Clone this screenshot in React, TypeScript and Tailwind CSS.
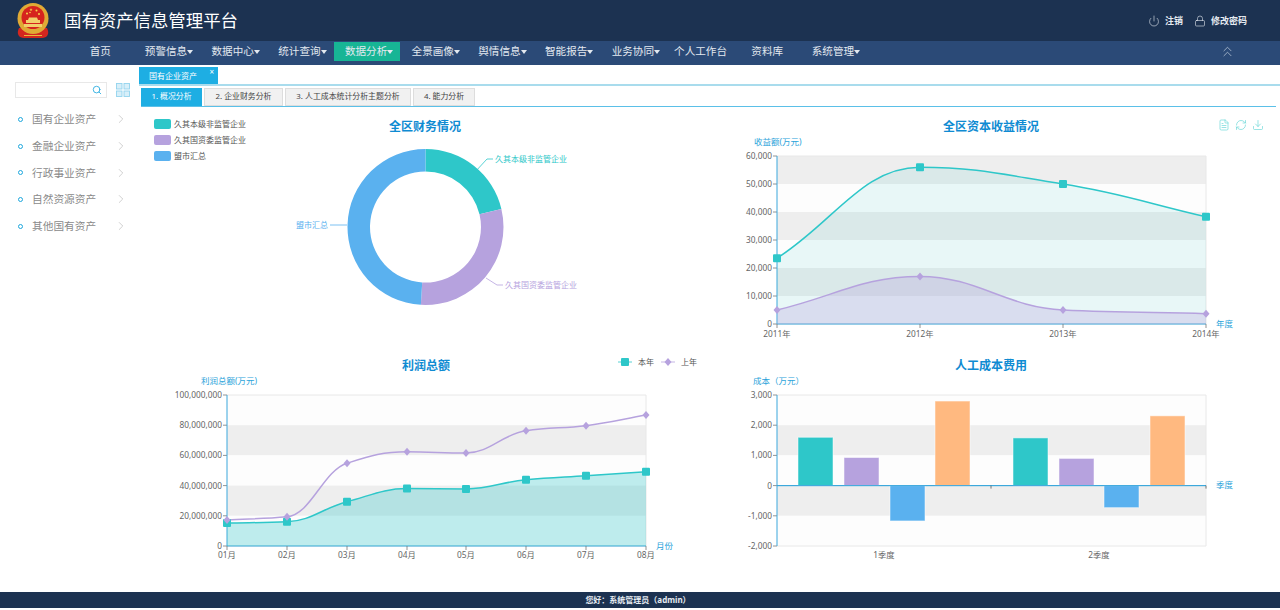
import { ChevronRight, ChevronsUp, Download, FileText, Lock, Power, RefreshCw, Search } from "lucide-react";

type Pt = [number, number];

const TEAL = "#2ec7c9";
const PURPLE = "#b6a2de";
const BLUE = "#5ab1ef";
const ORANGE = "#ffb980";
const AXIS = "#3ba7dc";

const navItems = [
  { label: "首页" },
  { label: "预警信息", caret: true },
  { label: "数据中心", caret: true },
  { label: "统计查询", caret: true },
  { label: "数据分析", caret: true, active: true },
  { label: "全景画像", caret: true },
  { label: "舆情信息", caret: true },
  { label: "智能报告", caret: true },
  { label: "业务协同", caret: true },
  { label: "个人工作台" },
  { label: "资料库" },
  { label: "系统管理", caret: true },
];

const sideItems = ["国有企业资产", "金融企业资产", "行政事业资产", "自然资源资产", "其他国有资产"];

const subTabs = [
  { label: "1. 概况分析", width: "w-[61px]", active: true },
  { label: "2. 企业财务分析", width: "w-[79px]" },
  { label: "3. 人工成本统计分析主题分析", width: "w-[126px]" },
  { label: "4. 能力分析", width: "w-[62px]" },
];

// 平滑曲線，轉折點切線為水平
const smooth = (pts: Pt[]) => {
  const sec = (i: number) => (pts[i + 1][1] - pts[i][1]) / (pts[i + 1][0] - pts[i][0]);
  const slope = (i: number) => {
    if (i === 0) return sec(0);
    if (i === pts.length - 1) return sec(i - 1);
    const d1 = sec(i - 1);
    const d2 = sec(i);
    if (d1 * d2 <= 0) return 0;
    return (2 * d1 * d2) / (d1 + d2);
  };
  let d = `M${pts[0][0]} ${pts[0][1]}`;
  for (let i = 0; i < pts.length - 1; i++) {
    const dx = (pts[i + 1][0] - pts[i][0]) * 0.4;
    d += ` C${pts[i][0] + dx} ${pts[i][1] + slope(i) * dx} ${pts[i + 1][0] - dx} ${pts[i + 1][1] - slope(i + 1) * dx} ${pts[i + 1][0]} ${pts[i + 1][1]}`;
  }
  return d;
};

const arc = (cx: number, cy: number, r0: number, r1: number, a0: number, a1: number) => {
  const p = (r: number, a: number) => {
    const t = (a * Math.PI) / 180;
    return `${cx + r * Math.sin(t)} ${cy - r * Math.cos(t)}`;
  };
  const large = a1 - a0 > 180 ? 1 : 0;
  return `M${p(r1, a0)} A${r1} ${r1} 0 ${large} 1 ${p(r1, a1)} L${p(r0, a1)} A${r0} ${r0} 0 ${large} 0 ${p(r0, a0)} Z`;
};

const Square = ({ x, y }: { x: number; y: number }) => (
  <rect x={x - 4} y={y - 4} width={8} height={8} rx={1} fill={TEAL} />
);

const Diamond = ({ x, y }: { x: number; y: number }) => (
  <path d={`M${x} ${y - 4} L${x + 3.5} ${y} L${x} ${y + 4} L${x - 3.5} ${y} Z`} fill={PURPLE} />
);

const Title = ({ x, y, children }: { x: number; y: number; children: string }) => (
  <text x={x} y={y + 4.5} textAnchor="middle" fontSize={12} fontWeight={700} fill="#0f8bd2">
    {children}
  </text>
);

const AxisName = ({ x, y, children }: { x: number; y: number; children: string }) => (
  <text x={x} y={y + 3} fontSize={8.5} fill="#2ba3da">
    {children}
  </text>
);

// 背景色帶與座標軸
const Grid = ({
  left,
  right,
  top,
  step,
  labels,
  firstGrey,
  zeroY,
  bottom,
}: {
  left: number;
  right: number;
  top: number;
  step: number;
  labels: string[];
  firstGrey: boolean;
  zeroY: number;
  bottom: number;
}) => (
  <g>
    {labels.slice(0, -1).map((_, i) => (
      <rect
        key={i}
        x={left}
        y={top + i * step}
        width={right - left}
        height={step}
        fill={(i % 2 === 0) === firstGrey ? "#eeeeee" : "#fdfdfd"}
      />
    ))}
    <path d={`M${left} ${top} H${right} V${bottom} H${left}`} fill="none" stroke="#e8e8e8" strokeWidth={1} />
    {labels.map((label, i) => (
      <g key={label}>
        <line x1={left - 4} x2={left} y1={top + i * step} y2={top + i * step} stroke="#777" strokeWidth={0.8} />
        <text x={left - 5} y={top + i * step + 3} textAnchor="end" fontSize={8.3} fill="#666">
          {label}
        </text>
      </g>
    ))}
    <line x1={left} x2={left} y1={top} y2={bottom} stroke={AXIS} strokeWidth={1} />
    <line x1={left} x2={right} y1={zeroY} y2={zeroY} stroke={AXIS} strokeWidth={1} />
  </g>
);

const PieChart = () => (
  <svg viewBox="139 108 570 239" className="h-[239px] w-[570px]">
    <Title x={425} y={126}>全区财务情况</Title>
    {[
      { y: 124, c: TEAL, t: "久其本级非监管企业" },
      { y: 140, c: PURPLE, t: "久其国资委监管企业" },
      { y: 156, c: BLUE, t: "盟市汇总" },
    ].map((l) => (
      <g key={l.t}>
        <rect x={154} y={l.y - 5} width={17} height={10} rx={2} fill={l.c} />
        <text x={174} y={l.y + 3} fontSize={8} fill="#555">{l.t}</text>
      </g>
    ))}
    <path d={arc(425.5, 227, 55.5, 78, 0, 76.6)} fill={TEAL} />
    <path d={arc(425.5, 227, 55.5, 78, 76.6, 183.4)} fill={PURPLE} />
    <path d={arc(425.5, 227, 55.5, 78, 183.4, 360)} fill={BLUE} />
    <path d="M475 172 L487 159 H493" fill="none" stroke={TEAL} strokeWidth={0.8} />
    <text x={495} y={162} fontSize={8} fill={TEAL}>久其本级非监管企业</text>
    <path d="M486 278 L497 285 H503" fill="none" stroke={PURPLE} strokeWidth={0.8} />
    <text x={505} y={288} fontSize={8} fill={PURPLE}>久其国资委监管企业</text>
    <path d="M330 225 H347" fill="none" stroke={BLUE} strokeWidth={0.8} />
    <text x={296} y={228} fontSize={8} fill={BLUE}>盟市汇总</text>
  </svg>
);

const ReturnChart = () => {
  const xs = [777, 920, 1063, 1206];
  const y = (v: number) => 324 - (v * 28) / 10000;
  const a: Pt[] = [23500, 56000, 50000, 38300].map((v, i) => [xs[i], y(v)]);
  const b: Pt[] = [5000, 17000, 5000, 3700].map((v, i) => [xs[i], y(v)]);
  return (
    <svg viewBox="709 108 571 239" className="h-[239px] w-[571px]">
      <Title x={991} y={126}>全区资本收益情况</Title>
      <AxisName x={754} y={142}>收益额(万元)</AxisName>
      <Grid
        left={777}
        right={1206}
        top={156}
        step={28}
        bottom={324}
        zeroY={324}
        firstGrey
        labels={["60,000", "50,000", "40,000", "30,000", "20,000", "10,000", "0"]}
      />
      <path d={`${smooth(a)} V324 H777 Z`} fill={TEAL} fillOpacity={0.1} />
      <path d={`${smooth(b)} V324 H777 Z`} fill={PURPLE} fillOpacity={0.3} />
      <path d={smooth(a)} fill="none" stroke={TEAL} strokeWidth={1.5} />
      <path d={smooth(b)} fill="none" stroke={PURPLE} strokeWidth={1.5} />
      {a.map(([px, py]) => <Square key={px} x={px} y={py} />)}
      {b.map(([px, py]) => <Diamond key={px} x={px} y={py} />)}
      {xs.map((px, i) => (
        <g key={px}>
          <line x1={px} x2={px} y1={324} y2={328} stroke="#777" strokeWidth={0.8} />
          <text x={px} y={337} textAnchor="middle" fontSize={8.3} fill="#666">{2011 + i}年</text>
        </g>
      ))}
      <AxisName x={1216} y={324}>年度</AxisName>
    </svg>
  );
};

const ProfitChart = () => {
  const xs = [227, 287, 347, 407, 466, 526, 586, 646];
  const y = (v: number) => 546 - v * 1.51;
  const a: Pt[] = [15.2, 16, 29.3, 38, 37.8, 43.9, 46.6, 49.2].map((v, i) => [xs[i], y(v)]);
  const b: Pt[] = [17.3, 19.3, 54.8, 62.4, 61.6, 76.3, 79.7, 86.7].map((v, i) => [xs[i], y(v)]);
  return (
    <svg viewBox="139 347 570 239" className="h-[239px] w-[570px]">
      <Title x={426} y={365}>利润总额</Title>
      <line x1={618} x2={632} y1={362} y2={362} stroke={TEAL} strokeWidth={0.8} />
      <Square x={625} y={362} />
      <text x={638} y={365} fontSize={8} fill="#555">本年</text>
      <line x1={661} x2={675} y1={362} y2={362} stroke={PURPLE} strokeWidth={0.8} />
      <Diamond x={668} y={362} />
      <text x={681} y={365} fontSize={8} fill="#555">上年</text>
      <AxisName x={201} y={381}>利润总额(万元)</AxisName>
      <Grid
        left={227}
        right={646}
        top={395}
        step={30.2}
        bottom={546}
        zeroY={546}
        firstGrey={false}
        labels={["100,000,000", "80,000,000", "60,000,000", "40,000,000", "20,000,000", "0"]}
      />
      <path d={`${smooth(a)} V546 H227 Z`} fill={TEAL} fillOpacity={0.3} />
      <path d={smooth(a)} fill="none" stroke={TEAL} strokeWidth={1.5} />
      <path d={smooth(b)} fill="none" stroke={PURPLE} strokeWidth={1.5} />
      {a.map(([px, py]) => <Square key={px} x={px} y={py} />)}
      {b.map(([px, py]) => <Diamond key={px} x={px} y={py} />)}
      {xs.map((px, i) => (
        <g key={px}>
          <line x1={px} x2={px} y1={546} y2={550} stroke="#777" strokeWidth={0.8} />
          <text x={px} y={558} textAnchor="middle" fontSize={8.3} fill="#666">0{i + 1}月</text>
        </g>
      ))}
      <AxisName x={656} y={546}>月份</AxisName>
    </svg>
  );
};

const CostChart = () => {
  const zero = 485.6;
  const bars = [
    { x: 798, v: 1600, c: TEAL },
    { x: 844, v: 930, c: PURPLE },
    { x: 890, v: -1170, c: BLUE },
    { x: 935, v: 2800, c: ORANGE },
    { x: 1013, v: 1580, c: TEAL },
    { x: 1059, v: 900, c: PURPLE },
    { x: 1104, v: -730, c: BLUE },
    { x: 1150, v: 2310, c: ORANGE },
  ];
  return (
    <svg viewBox="709 347 571 239" className="h-[239px] w-[571px]">
      <Title x={991} y={365}>人工成本费用</Title>
      <AxisName x={753} y={381}>成本（万元）</AxisName>
      <Grid
        left={777}
        right={1206}
        top={395}
        step={30.2}
        bottom={546}
        zeroY={zero}
        firstGrey={false}
        labels={["3,000", "2,000", "1,000", "0", "-1,000", "-2,000"]}
      />
      {bars.map((b) => {
        const h = (Math.abs(b.v) * 30.2) / 1000;
        return (
          <rect
            key={b.x}
            x={b.x}
            y={b.v > 0 ? zero - h : zero}
            width={35}
            height={h}
            fill={b.c}
            stroke="#ffffff"
            strokeOpacity={0.5}
          />
        );
      })}
      <line x1={777} x2={1206} y1={zero} y2={zero} stroke={AXIS} strokeWidth={1} />
      <line x1={991} x2={991} y1={zero} y2={zero + 3} stroke="#555" strokeWidth={0.8} />
      <line x1={1206} x2={1206} y1={zero} y2={zero + 3} stroke="#555" strokeWidth={0.8} />
      <text x={884} y={558} textAnchor="middle" fontSize={8.3} fill="#666">1季度</text>
      <text x={1099} y={558} textAnchor="middle" fontSize={8.3} fill="#666">2季度</text>
      <AxisName x={1216} y={485}>季度</AxisName>
    </svg>
  );
};

const Emblem = () => (
  <svg viewBox="0 0 34 36" className="h-9 w-[34px]">
    <path d="M3 25 C0 31 3 35 8 35 L26 35 C31 35 34 31 31 25 Z" fill="#d3261f" />
    <path d="M8 32.5 H26" stroke="#e8b93a" strokeWidth={1} />
    <circle cx={17} cy={15.5} r={15.5} fill="#e0aa35" />
    <circle cx={17} cy={14.5} r={11.5} fill="#d6231e" />
    <path d="M15 5 L16 8 L13.4 6.2 H16.6 L14 8 Z" fill="#f5d34c" />
    <circle cx={11} cy={10.5} r={1} fill="#f5d34c" />
    <circle cx={14} cy={9.5} r={0.8} fill="#f5d34c" />
    <circle cx={20.5} cy={7.5} r={1} fill="#f5d34c" />
    <circle cx={23} cy={11} r={1} fill="#f5d34c" />
    <path d="M10 20 H24 V17 H22 L21 14.5 H13 L12 17 H10 Z" fill="#f2cf6b" />
    <rect x={8} y={21} width={18} height={3} fill="#f2cf6b" />
  </svg>
);

const GridIcon = () => (
  <svg viewBox="0 0 14 14" className="ml-[9px] h-[14px] w-[14px]" fill="#d8eff9" stroke="#93d3ee" strokeWidth={0.9}>
    <rect x={0.5} y={0.5} width={5.5} height={5.5} />
    <rect x={8} y={0.5} width={5.5} height={5.5} />
    <rect x={0.5} y={8} width={5.5} height={5.5} />
    <rect x={8} y={8} width={5.5} height={5.5} />
  </svg>
);

const App = () => (
  <div className="flex h-[610px] w-[1280px] flex-col overflow-hidden bg-white font-['Noto_Sans','Noto_Sans_CJK_SC',sans-serif]">
    <header className="flex h-[41px] shrink-0 items-center bg-[#1c3251] pl-[16px] pr-[33px]">
      <Emblem />
      <h1 className="ml-[14px] text-[17.4px] text-white">国有资产信息管理平台</h1>
      <div className="ml-auto flex items-center text-[9px] font-bold text-[#e6ebf1]">
        <Power className="h-[12px] w-[12px]" strokeWidth={1.2} />
        <span className="ml-[5px]">注销</span>
        <Lock className="ml-[11px] h-[12px] w-[12px]" strokeWidth={1.2} />
        <span className="ml-[5px]">修改密码</span>
      </div>
    </header>

    <nav className="flex h-[24px] shrink-0 items-start bg-[#2b4a77] pl-[67px] pt-px">
      {navItems.map((item) => (
        <a
          key={item.label}
          className={`flex h-[19px] w-[66.7px] items-center justify-center text-[10.6px] text-[#e3e9f0] ${
            item.active ? "bg-[#17b595]" : ""
          } ${item.caret ? "pl-[4px]" : ""}`}
        >
          {item.label}
          {item.caret && (
            <span className="h-0 w-0 border-x-[3px] border-t-[4px] border-x-transparent border-t-[#e3e9f0]" />
          )}
        </a>
      ))}
      <ChevronsUp className="ml-[352px] mt-[1px] h-[17px] w-[17px] text-[#c5d2e0]" strokeWidth={1} />
    </nav>

    <main className="flex min-h-0 flex-1">
      <aside className="w-[139px] shrink-0 pl-[15px] pt-[17px]">
        <div className="flex items-center">
          <div className="flex h-[16px] w-[92px] items-center justify-end border border-[#e8e8e8] pr-[4px]">
            <Search className="h-[10px] w-[10px] text-[#1ea7dd]" strokeWidth={2} />
          </div>
          <GridIcon />
        </div>
        <ul className="mt-[8px]">
          {sideItems.map((label) => (
            <li key={label} className="flex h-[26.7px] items-center text-[10.7px] text-[#8a8a8a]">
              <span className="ml-[3px] mr-[9px] h-[5px] w-[5px] rounded-full border border-[#1ea7dd]" />
              {label}
              <ChevronRight className="ml-[18px] h-[14px] w-[14px] text-[#b0b0b0]" strokeWidth={1} />
            </li>
          ))}
        </ul>
      </aside>

      <section className="min-w-0 flex-1">
        <div className="mt-[2px] border-b-2 border-[#a9dced]">
          <div className="relative flex h-[17px] w-[79px] items-center bg-[#1eaee3] pl-[10px] text-[8px] text-white">
            国有企业资产
            <span className="absolute right-[4px] top-[-1px] text-[8px]">×</span>
          </div>
        </div>
        <div className="ml-[2px] mr-[4px] mt-[2px] flex h-[19px] gap-[2px] border-b border-[#5bc0e8]">
          {subTabs.map((t) => (
            <div
              key={t.label}
              className={`flex h-[18px] items-center justify-center text-[7.9px] ${t.width} ${
                t.active ? "bg-[#1eaee3] text-white" : "border border-[#dddddd] bg-[#f1f1f1] text-[#444]"
              }`}
            >
              {t.label}
            </div>
          ))}
        </div>
        <div className="relative grid grid-cols-[570px_571px] pt-px">
          <PieChart />
          <ReturnChart />
          <ProfitChart />
          <CostChart />
          <div className="absolute right-[16px] top-[12px] flex gap-[5px] text-[#6fd8d8]">
            <FileText className="h-[12px] w-[12px]" strokeWidth={1.4} />
            <RefreshCw className="h-[12px] w-[12px]" strokeWidth={1.4} />
            <Download className="h-[12px] w-[12px]" strokeWidth={1.4} />
          </div>
        </div>
      </section>
    </main>

    <footer className="mb-[2px] flex h-[16px] shrink-0 items-center justify-center bg-[#1c3251] pr-[4px] text-[8px] font-bold text-[#e6ebf1]">
      您好：系统管理员（admin）
    </footer>
  </div>
);

export default App;
